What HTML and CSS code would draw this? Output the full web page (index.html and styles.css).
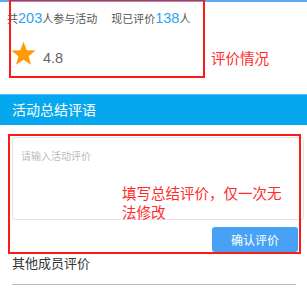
FILE: index.html
```html
<!DOCTYPE html>
<html lang="zh-CN">
<head>
    <meta charset="UTF-8">
    <meta name="viewport" content="width=device-width, initial-scale=1.0">
    <title>活动评价</title>
    <link rel="stylesheet" href="styles.css">
</head>
<body>
    <div class="top-line"></div>

    <div class="summary">
        <div class="stats">
            <span>共<em>203</em>人参与活动</span>
            <span class="stats-right">现已评价<em>138</em>人</span>
        </div>
        <div class="rating">
            <svg class="star" width="25" height="25" viewBox="0 0 24 24">
                <polygon points="12,0.8 15.1,8.9 23.6,9.2 16.9,14.6 19.3,22.9 12,18.1 4.7,22.9 7.1,14.6 0.4,9.2 8.9,8.9" fill="#ff9a05"/>
            </svg>
            <span class="score">4.8</span>
        </div>
    </div>

    <div class="section-title">活动总结评语</div>

    <div class="comment-box">
        <textarea class="comment-input" placeholder="请输入活动评价"></textarea>
        <div class="actions">
            <button class="confirm-button">确认评价</button>
        </div>
    </div>

    <div class="others">其他成员评价</div>
    <div class="divider"></div>

    <!-- annotations -->
    <div class="mark mark-summary"></div>
    <div class="note note-summary">评价情况</div>
    <div class="mark mark-comment"></div>
    <div class="note note-comment">填写总结评价，仅一次无法修改</div>
</body>
</html>
```

FILE: styles.css
```css
body {
    margin: 0;
    width: 307px;
    height: 290px;
    overflow: hidden;
    position: relative;
    background: #fff;
    font-family: "Liberation Sans", "Noto Sans CJK SC", sans-serif;
    color: #333;
}

.top-line {
    height: 2px;
    background: #5eaaf2;
}

.summary {
    height: 92px;
    padding-left: 7px;
}

.stats {
    display: flex;
    align-items: baseline;
    padding-top: 8px;
    font-size: 11px;
    color: #555;
}

.stats em {
    font-style: normal;
    font-size: 14.5px;
    color: #2ea4f0;
}

.stats-right {
    margin-left: 14px;
}

.rating {
    display: flex;
    align-items: center;
    margin-top: 15px;
    padding-left: 4px;
}

.score {
    margin-left: 7px;
    margin-top: 9px;
    font-size: 14.5px;
    color: #666;
}

.section-title {
    height: 30px;
    line-height: 30px;
    padding-left: 12px;
    background: #05a8ef;
    border-top: 1px solid #4fc1f5;
    color: #fff;
    font-size: 14px;
}

.comment-box {
    padding: 12px 0 0 12px;
}

.comment-input {
    display: block;
    box-sizing: border-box;
    width: 292px;
    height: 83px;
    margin: 0;
    padding: 10px 8px;
    border: 1px solid #e4e4e4;
    border-radius: 3px;
    resize: none;
    font-family: inherit;
    font-size: 10px;
}

.comment-input::placeholder {
    color: #bbb;
}

.actions {
    display: flex;
    justify-content: flex-end;
    padding: 7px 9px 0 0;
}

.confirm-button {
    width: 86px;
    height: 25px;
    border: none;
    border-radius: 3px;
    background: #47a2f6;
    color: #fff;
    font-family: inherit;
    font-size: 12px;
}

.others {
    padding: 1px 0 0 12px;
    font-size: 13px;
    color: #333;
}

.divider {
    margin: 12px 11px 0 12px;
    border-top: 1px solid #bbb;
}

.mark {
    position: absolute;
    border: 2px solid #ff1a1a;
    box-sizing: border-box;
}

.mark-summary {
    left: 9px;
    top: -1px;
    width: 196px;
    height: 79px;
}

.mark-comment {
    left: 8px;
    top: 134px;
    width: 293px;
    height: 120px;
}

.note {
    position: absolute;
    color: #ff2b2b;
    font-size: 14.5px;
}

.note-summary {
    left: 211px;
    top: 47px;
}

.note-comment {
    left: 122px;
    top: 185px;
    width: 168px;
    line-height: 19px;
}
```
